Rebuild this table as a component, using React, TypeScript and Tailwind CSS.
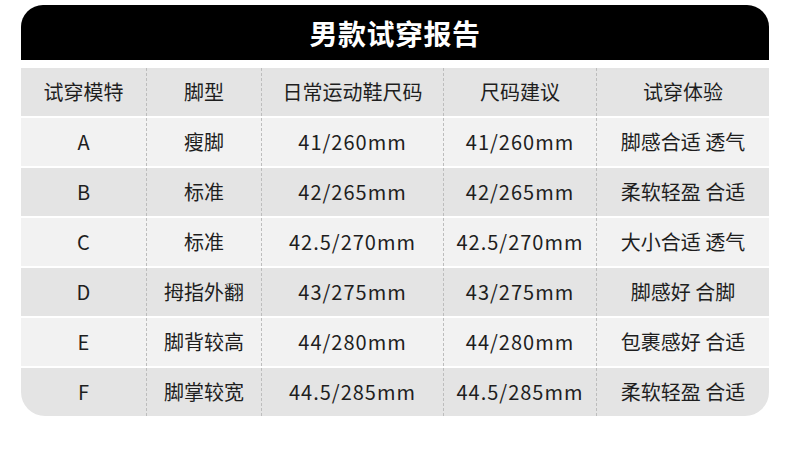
const rows = [
  ["A", "瘦脚", "41/260mm", "41/260mm", "脚感合适 透气"],
  ["B", "标准", "42/265mm", "42/265mm", "柔软轻盈 合适"],
  ["C", "标准", "42.5/270mm", "42.5/270mm", "大小合适 透气"],
  ["D", "拇指外翻", "43/275mm", "43/275mm", "脚感好 合脚"],
  ["E", "脚背较高", "44/280mm", "44/280mm", "包裹感好 合适"],
  ["F", "脚掌较宽", "44.5/285mm", "44.5/285mm", "柔软轻盈 合适"],
];

const head = ["试穿模特", "脚型", "日常运动鞋尺码", "尺码建议", "试穿体验"];

function Row({ cells, shade, isHead }: { cells: string[]; shade: boolean; isHead?: boolean }) {
  return (
    <div
      className={
        "grid h-[48px] grid-cols-[125px_115px_182px_153px_1fr] " +
        (shade ? "bg-[#e4e4e4]" : "bg-[#f2f2f2]")
      }
    >
      {cells.map((c, i) => (
        <div
          key={i}
          className={
            "flex items-center justify-center text-[20px] text-[#1e1e1e] " +
            (i > 0 ? "border-l border-dashed border-[#bdbdbd] " : "") +
            (!isHead && (i === 2 || i === 3) ? "tracking-[1px]" : "")
          }
        >
          {c}
        </div>
      ))}
    </div>
  );
}

export default function App() {
  return (
    <div
      className="h-[450px] w-[790px] bg-white pt-[5px]"
      style={{ fontFamily: '"Noto Sans CJK SC", "Noto Sans", sans-serif' }}
    >
      <div className="mx-auto w-[748px]">
        <div className="flex h-[55px] items-center justify-center rounded-t-[22px] bg-black">
          <h1 className="text-[28px] font-bold tracking-[0.5px] text-white">男款试穿报告</h1>
        </div>
        <div className="mt-[8px] flex flex-col gap-[2px] overflow-hidden rounded-b-[24px]">
          <Row cells={head} shade isHead />
          {rows.map((r, i) => (
            <Row key={r[0]} cells={r} shade={i % 2 === 1} />
          ))}
        </div>
      </div>
    </div>
  );
}
